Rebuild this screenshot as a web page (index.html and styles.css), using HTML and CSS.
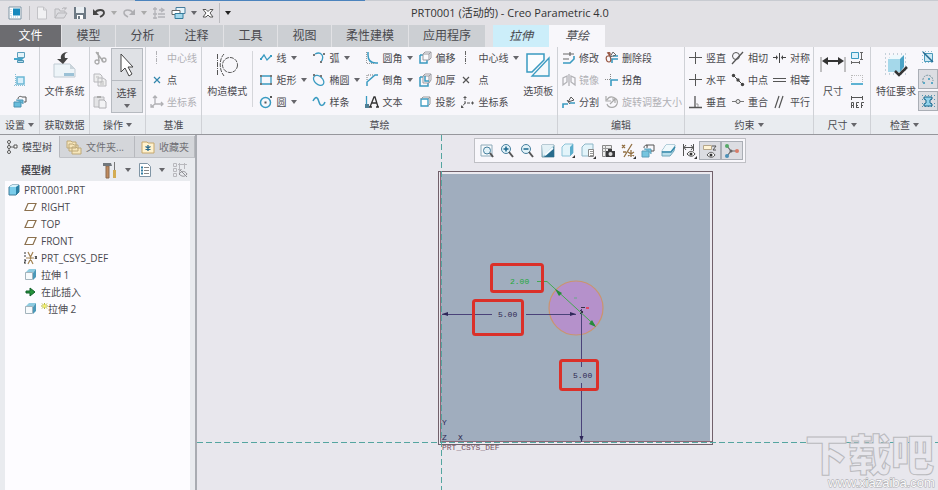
FILE: index.html
```html
<!DOCTYPE html>
<html lang="zh-CN">
<head>
<meta charset="utf-8">
<title>PRT0001 (活动的) - Creo Parametric 4.0</title>
<link rel="stylesheet" href="styles.css">
</head>
<body>
<header class="titlebar">
  <div class="progress"></div>
  <div class="quick">
    <button class="app" aria-label="窗口"><svg width="14" height="14" viewBox="0 0 14 14"><path d="M1 1h12v12H1z" fill="#fff" stroke="#7f95a5"/><path d="M5 2.500h7v7H5z" fill="#1689bd"/><path d="M3 3v8h8" fill="none" stroke="#a9c9dc" stroke-dasharray="1 1"/></svg></button>
    <button aria-label="新建"><svg width="14" height="14" viewBox="0 0 14 14"><path d="M2.500 1h6l3 3v9h-9z" fill="#f1f1f3" stroke="#c3c3c7"/><path d="M8.500 1v3h3" fill="none" stroke="#c3c3c7"/></svg></button>
    <button aria-label="打开"><svg width="14" height="14" viewBox="0 0 14 14"><path d="M1 12V3h4l1 2h5v2M1 12l3-5h9l-3 5zM8 3q2-3 4 0m0-2v2h-2" fill="#dcdce0" stroke="#b7b7bb"/></svg></button>
    <button aria-label="保存"><svg width="14" height="14" viewBox="0 0 14 14"><path d="M1 1h11l1 1v11H1z" fill="#6d7984"/><path d="M3 1h8v6H3z" fill="#e9eef2"/><path d="M4 9h6v4H4z" fill="#fff"/><path d="M5 10h2v3H5z" fill="#6d7984"/></svg></button>
    <button aria-label="撤消"><svg width="14" height="14" viewBox="0 0 14 14"><path d="M3 7c2-4 9-4 9 0 0 2-2 3-4 4" fill="none" stroke="#444" stroke-width="1.800"/><path d="M1 3v6h6z" fill="#444"/></svg></button>
    <i class="caret pale"></i>
    <button aria-label="重做"><svg width="14" height="14" viewBox="0 0 14 14"><path d="M11 7c-2-4-9-4-9 0 0 2 2 3 4 4" fill="none" stroke="#aeaeb2" stroke-width="1.500"/><path d="M13 3v6H7z" fill="#aeaeb2"/></svg></button>
    <i class="caret pale"></i>
    <button aria-label="重新生成"><svg width="14" height="14" viewBox="0 0 14 14"><path d="M3 1v12M6 11h7M6 8h7M1 3h4M1 8h4M1 12h4M7 4h4m-2-2 3 2-3 2" fill="none" stroke="#b3b3b8" stroke-width="1.300"/></svg></button>
    <button aria-label="窗口列表"><svg width="15" height="14" viewBox="0 0 15 14"><path d="M5 1.500h9v6H5z" fill="#e5f3fa" stroke="#477d9d"/><path d="M1 4.500h8v4H1z" fill="#fff" stroke="#666"/><path d="M4 7.500h8v5H4z" fill="#a3d8ec" stroke="#347c9d"/></svg></button>
    <i class="caret"></i>
    <button aria-label="关闭窗口"><svg width="12" height="12" viewBox="0 0 12 12"><path d="M1 2.500h3l2 2 2-2h3L8 6l3 4H8L6 8l-2 2H1l3-4z" fill="#fff" stroke="#555"/></svg></button>
    <span class="divider"></span>
    <i class="caret dark"></i>
  </div>
  <h1>PRT0001 (活动的) - Creo Parametric 4.0</h1>
</header>

<nav class="tabs">
  <a href="#" class="file">文件</a><a href="#">模型</a><a href="#">分析</a><a href="#">注释</a><a href="#">工具</a><a href="#">视图</a><a href="#" class="wide">柔性建模</a><a href="#" class="wide">应用程序</a><a href="#" class="context">拉伸</a><a href="#" class="current">草绘</a>
</nav>

<main>
<section class="ribbon">
  <div class="group">
    <div class="tools center">
      <div class="col icons">
        <button aria-label="草绘设置"><svg width="14" height="14" viewBox="0 0 14 14"><path d="M4.500 1.500h7v5h-7z" fill="#e4f4fa" stroke="#5d9fbd"/><path d="M1 7h10l-2 2H1z" fill="#45a6cb"/><path d="M4.500 9.500h6v2h-6z" fill="#b4dcec" stroke="#4c93b2"/></svg></button>
        <button aria-label="参考"><svg width="14" height="14" viewBox="0 0 14 14"><path d="M4 4h7v7H4z" fill="#d8effa" stroke="#6cb8d5" stroke-width="1.500"/><path d="M2.500 1v12M1 12.500h12" stroke="#87bdd4" stroke-dasharray="1 1"/></svg></button>
        <button aria-label="草绘视图"><svg width="14" height="14" viewBox="0 0 14 14"><path d="M1 7h7v5H1zM3 5h7v4" fill="#67bddc" stroke="#4a91b0"/><path d="M9 2h4v5h-2M5 4c0-3 3-3 4-2" fill="none" stroke="#555"/></svg></button>
      </div>
    </div>
    <h2>设置<i class="caret"></i></h2>
  </div>
  <div class="group">
    <div class="tools center">
      <button class="big"><svg width="24" height="28" viewBox="0 0 24 28"><path d="M1 13h16l5 5v8H1z" fill="#edf4f8" stroke="#c0cbd3"/><path d="M17 13v5h5z" fill="#cbd5dc"/><path d="M11 22h10v3H11z" fill="#9bc1d6"/><path d="M15 1c-5 0-8 3-7 7H4l6 5 5-6h-3c-1-3 0-5 3-6" fill="#444"/></svg>文件系统</button>
    </div>
    <h2>获取数据</h2>
  </div>
  <div class="group">
    <div class="tools center split">
      <div class="col icons">
        <button aria-label="剪切" disabled><svg width="14" height="14" viewBox="0 0 14 14"><path d="m3 1 7 9M5 1l1 9" stroke="#aaa" stroke-width="1.500"/><circle cx="4" cy="11" r="2" fill="none" stroke="#aaa" stroke-width="1.300"/><circle cx="11" cy="9" r="2" fill="none" stroke="#aaa" stroke-width="1.300"/></svg></button>
        <button aria-label="复制" disabled><svg width="14" height="14" viewBox="0 0 14 14"><path d="M1 1h6l2 2v6H1zM5 5h5l3 2v6H5z" fill="#eee" stroke="#b8b8bc"/><path d="M7 9h4M7 11h4M3 4h3" stroke="#bbb"/></svg></button>
        <button aria-label="粘贴" disabled><svg width="14" height="14" viewBox="0 0 14 14"><path d="M1 2h10v10H1z" fill="#e4e4e6" stroke="#b8b8bc"/><path d="M4 1h4v2H4z" fill="#aaa"/><path d="M6 5h5l2 2v6H6z" fill="#f3f3f5" stroke="#b0b0b4"/></svg></button>
      </div>
      <button class="select"><span><svg width="16" height="24" viewBox="0 0 16 24"><path d="M2 1v18l4-4 4 8 3-2-4-7h5z" fill="#fff" stroke="#444"/></svg></span><span>选择<i class="caret"></i></span></button>
    </div>
    <h2>操作<i class="caret"></i></h2>
  </div>
  <div class="group">
    <div class="tools indent">
      <div class="col">
        <button disabled><svg width="14" height="14" viewBox="0 0 14 14"><path d="M6.500 0v14" stroke="#b2b2b6" stroke-dasharray="4 1 1 1"/></svg>中心线</button>
        <button><svg width="14" height="14" viewBox="0 0 14 14"><path d="m4 4 6 6m0-6-6 6" stroke="#3186ad" stroke-width="1.200"/></svg>点</button>
        <button disabled><svg width="14" height="14" viewBox="0 0 14 14"><path d="M5 1v8h8M5 9l-4 3M3 3l2-2 2 2M11 7l2 2-2 2M1 9v3h3" fill="none" stroke="#b0b0b4" stroke-width="1.300"/></svg>坐标系</button>
      </div>
    </div>
    <h2>基准</h2>
  </div>
  <div class="group">
    <div class="tools">
      <button class="big mode"><svg width="24" height="28" viewBox="0 0 24 28"><path d="M2.500 3v22" stroke="#555" stroke-dasharray="5 1 1 1"/><path d="M9 3c-5 5-5 16 0 22" fill="none" stroke="#555" stroke-dasharray="4 1"/><circle cx="15" cy="14" r="7.500" fill="none" stroke="#555" stroke-dasharray="4 1"/></svg>构造模式</button>
      <div class="sketch">
        <div class="col">
          <button><svg width="14" height="14" viewBox="0 0 14 14"><path d="m2 8 3-4 3 5 4-4" fill="none" stroke="#3a9bc1" stroke-width="1.300"/><path d="M1 7h2v2H1zM11 4h2v2h-2z" fill="#3a9bc1"/></svg>线<i class="caret"></i></button>
          <button><svg width="14" height="14" viewBox="0 0 14 14"><path d="M2 3h10v8H2z" fill="none" stroke="#3a9bc1" stroke-width="1.300"/><path d="M1 2h2v2H1zM11 2h2v2h-2zM1 10h2v2H1zM11 10h2v2h-2z" fill="#777"/></svg>矩形<i class="caret"></i></button>
          <button><svg width="14" height="14" viewBox="0 0 14 14"><circle cx="6.500" cy="7.500" r="5" fill="none" stroke="#3a9bc1" stroke-width="1.500"/><path d="M5.500 6.500h2v2h-2zM11 1h2v2h-2z" fill="#555"/></svg>圆<i class="caret"></i></button>
        </div>
        <div class="col">
          <button><svg width="14" height="14" viewBox="0 0 14 14"><path d="M3 3c6-3 10 2 6 8" fill="none" stroke="#3a9bc1" stroke-width="1.300"/><path d="M1 3h2v2H1zM11 2h2v2h-2zM8 10h2v2H8z" fill="#777"/></svg>弧<i class="caret"></i></button>
          <button><svg width="14" height="14" viewBox="0 0 14 14"><ellipse cx="7" cy="7.500" rx="6" ry="4" transform="rotate(42 7 7)" fill="none" stroke="#3a9bc1" stroke-width="1.300"/><path d="M1 1h2v2H1zM8 2h2v2H8z" fill="#777"/></svg>椭圆<i class="caret"></i></button>
          <button><svg width="14" height="14" viewBox="0 0 14 14"><path d="M1 6c3-6 5-3 6 1s4 5 6 0" fill="none" stroke="#3a9bc1" stroke-width="1.500"/></svg>样条</button>
        </div>
        <div class="col">
          <button><svg width="14" height="14" viewBox="0 0 14 14"><path d="M3 1v3c0 5 3 8 8 8h2" fill="none" stroke="#3a9bc1" stroke-width="1.500"/><path d="M1.500 1v11.500H10" fill="none" stroke="#999" stroke-dasharray="1 1"/></svg>圆角<i class="caret"></i></button>
          <button><svg width="14" height="14" viewBox="0 0 14 14"><path d="M2 13V9l8-7h3" fill="none" stroke="#3a9bc1" stroke-width="1.500"/><path d="M2 7V2h6" fill="none" stroke="#777" stroke-dasharray="1 1"/></svg>倒角<i class="caret"></i></button>
          <button><svg width="14" height="14" viewBox="0 0 14 14"><path d="M1.500 1v9" fill="none" stroke="#3a9bc1" stroke-width="1.300"/><path d="m5 12 4-10h1l3 10M7 8h5M4 12h3M11 12h3" fill="none" stroke="#333" stroke-width="1.300"/><path d="M0 9h4v4H0z" fill="#4f7f95"/></svg>文本</button>
        </div>
        <div class="col">
          <button><svg width="14" height="14" viewBox="0 0 14 14"><path d="M2 4v8h7V9M2 4h3" fill="none" stroke="#3a9bc1" stroke-width="1.500"/><path d="M5 3h6v6H5zM5 3l2-2h6l-2 2m2-2v6l-2 2" fill="#fafafd" stroke="#9a9aa0"/></svg>偏移</button>
          <button><svg width="14" height="14" viewBox="0 0 14 14"><path d="M2 4v9h8v-3M2 4h3" fill="none" stroke="#3a9bc1" stroke-width="1.500"/><path d="M5 3h6v7H5zM5 3l2-2h6l-2 2m2-2v6l-2 3" fill="#fafafd" stroke="#9a9aa0"/><path d="M7 3v5h4" fill="none" stroke="#3a9bc1" stroke-width="1.500"/></svg>加厚</button>
          <button><svg width="14" height="14" viewBox="0 0 14 14"><path d="M3 4h7v7H3z" fill="#fff" stroke="#3a9bc1" stroke-width="1.300"/><path d="m3 4 2-2h7l-2 2m2-2v7l-2 2" fill="none" stroke="#999"/></svg>投影</button>
        </div>
        <div class="col">
          <button><svg width="14" height="14" viewBox="0 0 14 14"><path d="M4.500 0v14" stroke="#666" stroke-dasharray="4 1 1 1"/></svg>中心线<i class="caret"></i></button>
          <button><svg width="14" height="14" viewBox="0 0 14 14"><path d="m2 4 6 6m0-6-6 6" stroke="#555" stroke-width="1.200"/></svg>点</button>
          <button><svg width="14" height="14" viewBox="0 0 14 14"><path d="M4 2v6h8M4 8l-3 4" fill="none" stroke="#555" stroke-dasharray="3 1"/><path d="m2 3 2-2 2 2zM11 6l2 2-2 2zM0 10v3h3z" fill="#555"/></svg>坐标系</button>
        </div>
      </div>
      <button class="big palette"><svg width="24" height="28" viewBox="0 0 24 28"><path d="M1 3h17v6L6 21H1z" fill="#fbfdff" stroke="#3a9bc1" stroke-width="1.500"/><path d="M23 7v18H6z" fill="#f4f8fb" stroke="#3a9bc1" stroke-width="1.300"/></svg>选项板</button>
    </div>
    <h2>草绘</h2>
  </div>
  <div class="group">
    <div class="tools indent edit">
      <div class="col">
        <button><svg width="14" height="14" viewBox="0 0 14 14"><path d="M1 3h11M8 1v4M1 8h6" fill="none" stroke="#666" stroke-width="1.200"/><path d="M1 12h7l4-4V5" fill="none" stroke="#3a9bc1" stroke-width="1.600"/></svg>修改</button>
        <button disabled><svg width="14" height="14" viewBox="0 0 14 14"><path d="M7 1v12M5 3 1 5v7l4-3zM9 3l4 2v7L9 9z" fill="none" stroke="#b2b2b6" stroke-width="1.300"/></svg>镜像</button>
        <button><svg width="14" height="14" viewBox="0 0 14 14"><path d="M1 13V9h5M8 8h5" fill="none" stroke="#3a9bc1" stroke-width="1.600"/><path d="m6 7 3-5 3 3zM5 5l3 4" fill="none" stroke="#555"/></svg>分割</button>
      </div>
      <div class="col">
        <button><svg width="14" height="14" viewBox="0 0 14 14"><path d="M7 12V8h6M8 5h5" fill="none" stroke="#3a9bc1" stroke-width="1.600"/><path d="M2 2c4-2 4 3 1 3s-2 6 1 6 2-6-1-9" fill="none" stroke="#94533f" stroke-width="1.200"/><path d="m5 6 3-5 3 3z" fill="none" stroke="#666"/></svg>删除段</button>
        <button><svg width="14" height="14" viewBox="0 0 14 14"><path d="M5.500 1v5M0 6.500h5" stroke="#888" stroke-dasharray="1 1"/><path d="M6 13V7h7" fill="none" stroke="#3a9bc1" stroke-width="1.600"/></svg>拐角</button>
        <button disabled><svg width="14" height="14" viewBox="0 0 14 14"><path d="M2 5c3-6 12-2 10 4-2 5-9 4-10 0M1 1v5h5M5 9l5-5M10 8V4H7" fill="none" stroke="#aaa" stroke-width="1.200"/></svg>旋转调整大小</button>
      </div>
    </div>
    <h2>编辑</h2>
  </div>
  <div class="group">
    <div class="tools indent constraints">
      <div class="col">
        <button><svg width="14" height="14" viewBox="0 0 14 14"><path d="M6.500 1v12M0 6.500h13" stroke="#555"/></svg>竖直</button>
        <button><svg width="14" height="14" viewBox="0 0 14 14"><path d="M6.500 1v12M0 6.500h13" stroke="#555"/></svg>水平</button>
        <button><svg width="14" height="14" viewBox="0 0 14 14"><path d="M6 1v11M0 12.500h13" stroke="#555" stroke-width="1.300"/><path d="M6 9h3v3" fill="none" stroke="#999"/></svg>垂直</button>
      </div>
      <div class="col">
        <button><svg width="14" height="14" viewBox="0 0 14 14"><circle cx="5" cy="5" r="3.500" fill="none" stroke="#555"/><path d="M1 13 12 1" stroke="#555" stroke-width="1.300"/></svg>相切</button>
        <button><svg width="14" height="14" viewBox="0 0 14 14"><path d="m2 2 10 10" stroke="#444"/><circle cx="2.500" cy="2.500" r="1.700" fill="#444"/><circle cx="7" cy="7" r="1.700" fill="#444"/><circle cx="11.500" cy="11.500" r="1.700" fill="#444"/></svg>中点</button>
        <button><svg width="14" height="14" viewBox="0 0 14 14"><path d="M1 6.500h12" stroke="#777"/><circle cx="7" cy="6.500" r="2" fill="#eee" stroke="#666"/></svg>重合</button>
      </div>
      <div class="col">
        <button><svg width="14" height="14" viewBox="0 0 14 14"><path d="M6.500 2v10M0 6.500h4M9 6.500h4" fill="none" stroke="#444"/><path d="m3 4 2 2.500L3 9zM10 4 8 6.500 10 9z" fill="#444"/></svg>对称</button>
        <button><svg width="14" height="14" viewBox="0 0 14 14"><path d="M0 5.500h13M0 8.500h13" stroke="#555" stroke-width="1.200"/></svg>相等</button>
        <button><svg width="14" height="14" viewBox="0 0 14 14"><path d="M2 13 6 1M6 13l4-12" stroke="#555" stroke-width="1.200"/></svg>平行</button>
      </div>
    </div>
    <h2>约束<i class="caret"></i></h2>
  </div>
  <div class="group">
    <div class="tools center split">
      <button class="big"><svg width="26" height="28" viewBox="0 0 26 28"><path d="M1 6v15M25 6v15" stroke="#888"/><path d="M4 10h18" stroke="#333" stroke-width="2"/><path d="m2 10 6-4v8zM24 10l-6-4v8z" fill="#333"/></svg>尺寸</button>
      <div class="col icons">
        <button aria-label="周长"><svg width="14" height="14" viewBox="0 0 14 14"><path d="M1.500 1.500h7v6h-7z" fill="#dff2fb" stroke="#3a9bc1"/><path d="M11.500 1v8M1 11.500h9M10 1.500h3M10 8.500h3M1.500 10v3M9.500 10v3" stroke="#666"/></svg></button>
        <button aria-label="基线"><svg width="14" height="14" viewBox="0 0 14 14"><path d="M1.500 2v8M12.500 2v8M2 2.500h10" fill="none" stroke="#bbb" stroke-dasharray="1 1"/><path d="M1 11h12" stroke="#5db2d3" stroke-width="2"/></svg></button>
        <button aria-label="参考尺寸"><svg width="14" height="14" viewBox="0 0 14 14"><path d="M1.500 1v4M12.500 1v4M2 2.500h10M1.500 13V7.500h2v3h-2m2 0V13M6.500 13V7.500H9M6 10.500h2M6 12.500h3M11.500 13V7.500H14M11 10.500h2" fill="none" stroke="#555"/></svg></button>
      </div>
    </div>
    <h2>尺寸<i class="caret"></i></h2>
  </div>
  <div class="group">
    <div class="tools center inspect">
      <button class="big"><svg width="24" height="28" viewBox="0 0 24 28"><path d="M1 3h22M1 7h22M1 11h22M1 15h22M1 19h22M1 23h22" stroke="#91aab9" stroke-dasharray="1 3"/><path d="m4 8 4-4h12l-4 4z" fill="#eef9fd"/><path d="M4 8h12v13H4z" fill="#a5d8ea"/><path d="m16 8 4-4v12l-4 5z" fill="#4ba3c6"/><path d="m11 20 4 4 8-8" fill="none" stroke="#333" stroke-width="2.500"/></svg>特征要求</button>
      <div class="col toggles">
        <button aria-label="重叠几何"><svg width="14" height="14" viewBox="0 0 14 14"><path d="M1 1.500h12M1 5.500h12M1 9.500h12M1 12.500h12" stroke="#8cbdd0" stroke-dasharray="1 2"/><path d="M3.500 3.500h8v8h-8z" fill="#cde9f4" stroke="#4a9abb"/><path d="m2 2 10 10" fill="none" stroke="#246b92" stroke-width="1.500"/></svg></button>
        <button class="on" aria-label="突出显示开放端"><svg width="14" height="14" viewBox="0 0 14 14"><path d="M2 11c-2-10 10-10 10-2" fill="none" stroke="#7895a0" stroke-dasharray="2 1"/><path d="M2 10h2v2H2zM7 6h2v2H7zM10 10h2v2h-2z" fill="#5aa9c6"/></svg></button>
        <button class="on" aria-label="着色封闭环"><svg width="14" height="14" viewBox="0 0 14 14"><path d="M1 1.500h13M1 5.500h13M1 9.500h13M1 12.500h13" stroke="#5696b0" stroke-dasharray="1 2"/><path d="M3 3h8v2L9 6v3l2 1v2H3v-2l2-1V6L3 5z" fill="#93d3eb" stroke="#19678c"/></svg></button>
      </div>
    </div>
    <h2>检查<i class="caret"></i></h2>
  </div>
</section>

<div class="workspace">
  <aside>
    <nav class="panel-tabs">
      <a href="#" class="current"><svg width="12" height="16" viewBox="0 0 12 16"><path d="M3 4v9M5 8h3" stroke="#666"/><g fill="#fff" stroke="#555"><circle cx="3" cy="3" r="1.500"/><circle cx="3" cy="8" r="1.500"/><circle cx="3" cy="13" r="1.500"/><path d="M8 6h3v3H8z"/></g></svg>模型树</a>
      <a href="#"><svg width="16" height="16" viewBox="0 0 16 16"><path d="M1 2h4l1 1h4v6H1zM3 5h4l1 1h4v6H3zM6 8h4l1 1h4v6H6z" fill="#f6e6bb" stroke="#bda878"/></svg>文件夹...</a>
      <a href="#"><svg width="14" height="14" viewBox="0 0 14 14"><path d="M1 2h5l1 1h6v10H1z" fill="#fff2ce" stroke="#c6a76a"/><path d="M7 5v6M4.500 6.500l5 3M9.500 6.500l-5 3" stroke="#27698c" stroke-width="1.300"/></svg>收藏夹</a>
    </nav>
    <div class="panel-head">
      <h2>模型树</h2>
      <button aria-label="设置"><svg width="16" height="18" viewBox="0 0 16 18"><path d="M4 5h3v12H4z" fill="#c08a5c" stroke="#8a6a50"/><path d="M1 2h8l1 3H1z" fill="#71777c"/><path d="M12.500 1v9" stroke="#777"/><path d="M11 9h3v8h-3z" fill="#d3ac53"/></svg></button><i class="caret"></i>
      <button aria-label="显示"><svg width="14" height="16" viewBox="0 0 14 16"><path d="M1.500 1.500h8l3 3v10h-11z" fill="#fff" stroke="#8095a5"/><path d="M3 5.500h2M3 8.500h2M3 11.500h2" stroke="#347da1" stroke-width="2"/><path d="M6 5.500h5M6 8.500h5M6 11.500h5" stroke="#888"/></svg></button><i class="caret"></i>
      <button aria-label="隐藏列" disabled><svg width="16" height="16" viewBox="0 0 16 16"><path d="M1.500 1.500h3v3h-3zM1.500 6.500h3v3h-3zM1.500 11.500h3v3h-3zM7.500 1v12M12.500 1v6M6 2.500h9M6 7.500h4" fill="none" stroke="#b8b8bd"/><path d="M7 12c3-4 6-3 8 0-2 3-5 3-8 0m1-4 7 7" fill="none" stroke="#909095"/></svg></button>
    </div>
    <ul class="tree">
      <li class="root"><svg width="12" height="12" viewBox="0 0 12 12"><path d="m1 3 3-2h7v7l-3 3H1z" fill="#7accea" stroke="#417d99"/><path d="m1 3 3-2h7L8 3z" fill="#d7f2fb"/><path d="M8 3v8l3-3V1z" fill="#297fa4"/></svg>PRT0001.PRT</li>
      <li><svg width="13" height="12" viewBox="0 0 13 12"><path d="M4 2.500h8l-3 7H1z" fill="#fff" stroke="#8c704e" stroke-width="1.200"/></svg>RIGHT</li>
      <li><svg width="13" height="12" viewBox="0 0 13 12"><path d="M4 2.500h8l-3 7H1z" fill="#fff" stroke="#8c704e" stroke-width="1.200"/></svg>TOP</li>
      <li><svg width="13" height="12" viewBox="0 0 13 12"><path d="M4 2.500h8l-3 7H1z" fill="#fff" stroke="#8c704e" stroke-width="1.200"/></svg>FRONT</li>
      <li><svg width="13" height="14" viewBox="0 0 13 14"><path d="m4 1 3 6-3 6M9 1 6 7l3 6M2 7h8" fill="none" stroke="#a38454" stroke-width="1.200"/><path d="M0 2h2M0 5h2M0 9h2l-2 3h2M11 5l2 3m0-3-2 3" fill="none" stroke="#333"/></svg>PRT_CSYS_DEF</li>
      <li><svg width="13" height="13" viewBox="0 0 13 13"><path d="m1 5 4-4h7L9 5z" fill="#8fcbe0"/><path d="m9 5 3-4v8l-3 3z" fill="#4b98b8"/><path d="M1.500 4.500h7v7h-7z" fill="#f7fafc" stroke="#a3b3bc"/></svg>拉伸 1</li>
      <li><svg width="13" height="12" viewBox="0 0 13 12"><path d="M2 5h4V2l5 4-5 4V7H2z" fill="#25943a" stroke="#12602b"/></svg>在此插入</li>
      <li><svg width="13" height="13" viewBox="0 0 13 13"><path d="m1 5 4-4h7L9 5z" fill="#8fcbe0"/><path d="m9 5 3-4v8l-3 3z" fill="#4b98b8"/><path d="M1.500 4.500h7v7h-7z" fill="#f7fafc" stroke="#a3b3bc"/></svg><svg class="spark" width="7" height="13" viewBox="0 0 7 13"><path d="M3.500 1v6M0 4h7M1 1.500l5 5M6 1.500l-5 5" stroke="#b5b735"/><circle cx="3.500" cy="4" r="1.500" fill="#f5f36e"/></svg>拉伸 2</li>
    </ul>
  </aside>

  <div class="canvas">
    <div class="viewbar">
      <button aria-label="重新调整"><svg width="16" height="16" viewBox="0 0 16 16"><path d="M2 2h11v11H2z" fill="#f6f9fb" stroke="#8daab9"/><circle cx="8" cy="7.500" r="3.500" fill="#e2f2f8" stroke="#467f9e"/><path d="m11 10 3 4" stroke="#555" stroke-width="2"/></svg></button>
      <button aria-label="放大"><svg width="16" height="16" viewBox="0 0 16 16"><circle cx="7" cy="6" r="4.500" fill="#e2f2f8" stroke="#467f9e"/><path d="M4.500 6h5M7 3.500v5" stroke="#1b688f" stroke-width="1.500"/><path d="m10 9 4 5" stroke="#555" stroke-width="2"/></svg></button>
      <button aria-label="缩小"><svg width="16" height="16" viewBox="0 0 16 16"><circle cx="7" cy="6" r="4.500" fill="#e2f2f8" stroke="#467f9e"/><path d="M4.500 6h5" stroke="#1b688f" stroke-width="1.500"/><path d="m10 9 4 5" stroke="#555" stroke-width="2"/></svg></button>
      <button aria-label="重画"><svg width="16" height="16" viewBox="0 0 16 16"><path d="M2 2h12v12H2z" fill="#a4cfdf" stroke="#779baa"/><path d="M2 2h12L3 13z" fill="#e4f1f6"/><path d="M14 4v10H4z" fill="#286c8d"/><path d="m5 12 8-7" stroke="#f5fbff" stroke-width="2"/></svg></button>
      <button aria-label="显示样式"><svg width="16" height="16" viewBox="0 0 16 16"><path d="m2 4 3-3h8v9l-3 3H2z" fill="#e3f4fa" stroke="#8cc3d8"/><path d="M10 4v9l3-3V1z" fill="#5badcc"/><path d="M15 12v3h-3z" fill="#333"/></svg></button>
      <button aria-label="已保存方向"><svg width="16" height="16" viewBox="0 0 16 16"><path d="m2 4 3-3h8v8l-3 4H2z" fill="#e3f4fa" stroke="#8db6c7"/><path d="M8.500 6.500h5v7h-5z" fill="#fff" stroke="#888"/><path d="M10 8.500h3M10 10.500h3M10 12.500h3" stroke="#999"/><path d="M16 13v3h-3z" fill="#333"/></svg></button>
      <button aria-label="视图管理器"><svg width="16" height="16" viewBox="0 0 16 16"><path d="M2.500 2.500h9v11h-9z" fill="#eee" stroke="#888"/><path d="M5.500 2v12M2 5.500h10M2 8.500h10" stroke="#999"/><path d="M6 8h9v6H6zM8 6h4v3H8z" fill="#3b3b3d"/><circle cx="10.500" cy="11" r="2" fill="#ddd"/></svg></button>
      <button aria-label="基准显示过滤器"><svg width="16" height="16" viewBox="0 0 16 16"><path d="m2 2 3 3m0-3L2 5M12 1 4 14M11 7v7M8 9l6 4M14 9l-6 4M3 9h3" fill="none" stroke="#927043" stroke-width="1.300"/><path d="M16 13v3h-3z" fill="#333"/></svg></button>
      <button aria-label="草绘视图"><svg width="16" height="16" viewBox="0 0 16 16"><path d="M2 8h7v6H2zM4 6h7v5" fill="#75c5df" stroke="#5c9db8"/><path d="M8 2h6v6h-3M4 5c0-3 2-3 4-2M7 1v4" fill="none" stroke="#555"/></svg></button>
      <button aria-label="剪切视图"><svg width="16" height="16" viewBox="0 0 16 16"><path d="m2 8 4-6h9l-1 6-4 5H2z" fill="#b9dfec" stroke="#70a5b9"/><path d="m2 8 4-6h9l-4 6z" fill="#f1f9fc"/><path d="M2 9h9l4-5" fill="none" stroke="#3788a9" stroke-width="1.500"/></svg></button>
      <button aria-label="草绘显示"><svg width="16" height="16" viewBox="0 0 16 16"><path d="M2.500 1v12M12.500 1v7M3 4.500h9M5 2 3 4.500 5 7M10 2l2 2.500L10 7" fill="none" stroke="#555"/><path d="M6 11c3-4 6-3 8 0-2 3-5 3-8 0" fill="#fff" stroke="#444"/><circle cx="10" cy="11" r="1.500" fill="#333"/><path d="M16 13v3h-3z" fill="#333"/></svg></button>
      <button class="on" aria-label="注释显示"><svg width="16" height="16" viewBox="0 0 16 16"><path d="M1.500 2.500h8v4h-8z" fill="#fff4d6" stroke="#b5a68a"/><path d="M10 3h4l-3 4h3" fill="none" stroke="#555"/><path d="M5 12c3-4 6-3 8 0-2 3-5 3-8 0" fill="#fff" stroke="#555"/><circle cx="9" cy="12" r="1.500" fill="#333"/></svg></button>
      <button class="on" aria-label="旋转中心"><svg width="16" height="16" viewBox="0 0 16 16"><path d="M3 3 7 8h6M7 8l-4 5" fill="none" stroke="#666" stroke-width="1.200"/><circle cx="3" cy="3" r="2" fill="#56a967"/><circle cx="13" cy="8" r="2" fill="#d77c68"/><circle cx="3" cy="13" r="2" fill="#4b91b8"/><circle cx="7" cy="8" r="1.500" fill="#666"/></svg></button>
    </div>
    <svg class="drawing" viewBox="197 135 741 355" preserveAspectRatio="xMinYMin meet">
      <rect x="438.500" y="171.500" width="274" height="273" fill="#eceaf0" stroke="#71616b"/>
      <rect x="441" y="174" width="269" height="268" fill="#a0adbe"/>
      <path d="M441 441.500h271M440.500 172v270" stroke="#8c6876"/>
      <path d="M441.500 135v355M197 442.500h741" stroke="#54a5a0" stroke-dasharray="6 3"/>
      <circle cx="576" cy="308" r="27" fill="#b591cb" stroke="#ca946f" stroke-width="1.200"/>
      <g fill="none" stroke="#4a4279"><path d="M442 314.500h50M526 314.500h50M581.500 309v58M581.500 383v59"/></g>
      <path d="m442 314 6-2v4zM576 314l-6-2v4zM581.500 442l-2-6h4z" fill="#2f2859"/>
      <path d="M537 281.500h10l48 44" fill="none" stroke="#43a951"/>
      <path d="m555 289 7 4-3 3zM596 327l-7-3 3-4z" fill="#268b3b"/>
      <path d="M574 298h3" stroke="#67a984"/>
      <path d="m580 310 3 3m-3 1 3-3M581 307.500h4" stroke="#373048"/><path d="M586 307h3v2h-3z" fill="#df4967"/>
      <g class="dims"><text class="green" x="510" y="284">2.00</text><text x="498" y="317">5.00</text><text x="573" y="378">5.00</text><text x="442" y="425">Y</text><text x="442" y="440">Z</text><text x="458" y="440">X</text><text class="csys" x="442" y="450">PRT_CSYS_DEF</text></g>
      <g fill="none" stroke="#db3029" stroke-width="3"><rect x="491.500" y="264.500" width="51" height="27" rx="2"/><rect x="473.500" y="300.500" width="49" height="34" rx="2"/><rect x="560.500" y="360.500" width="37" height="29" rx="2"/></g>
      <text class="mark" x="805" y="471">下载吧</text>
      <text class="site" x="828" y="487">www.xiazaiba.com</text>
    </svg>
  </div>
</div>
</main>
</body>
</html>
```
FILE: styles.css
```css
* { box-sizing: border-box; }
body {
  margin: 0;
  height: 100vh;
  display: flex;
  flex-direction: column;
  overflow: hidden;
  background: #e2e1e5;
  color: #4a4a4f;
  font-family: "Open Sans", "Noto Sans CJK SC", sans-serif;
  font-size: 10px;
  line-height: 14px;
}
button { margin: 0; padding: 0; border: 0; background: none; color: inherit; font: inherit; white-space: nowrap; }
button:disabled { color: #b0b0b5; }
a { color: inherit; text-decoration: none; white-space: nowrap; }
h1, h2 { margin: 0; font-weight: 400; }
svg { display: block; flex: none; }
.caret { flex: none; border: 3px solid transparent; border-top: 4px solid #66666b; border-bottom: 0; }
.caret.pale { border-top-color: #aaa; }
.caret.dark { border-top-color: #222; }

.titlebar { position: relative; display: flex; align-items: center; height: 25px; border-top: 1px solid #c8cbd1; flex: none; }
.progress { position: absolute; left: 135px; top: -1px; width: 230px; height: 1px; background: #4b83bd; }
.quick { display: flex; align-items: center; gap: 5px; padding-left: 8px; width: 411px; }
.quick .app { padding-right: 7px; border-right: 1px solid #bcbcc0; }
.quick .divider { width: 1px; height: 20px; background: #bcbcc0; }
h1 { font-size: 11px; line-height: 18px; color: #333; white-space: nowrap; }

.tabs { display: flex; height: 22px; flex: none; font-size: 12px; line-height: 21px; text-align: center; }
.tabs a { width: 54px; background: #cccfd3; border-right: 1px solid #e2e2e5; }
.tabs .file { width: 62px; background: #6c6c70; color: #fff; }
.tabs .wide { width: 77px; }
.tabs .context { margin-left: 7px; width: 56px; background: #cceefa; font-style: italic; border: 0; }
.tabs .current { width: 56px; background: #f8f7fb; font-style: italic; border: 0; }

main { flex: 1; min-height: 0; display: flex; flex-direction: column; }
.ribbon { display: grid; grid-template-columns: 40fr 50fr 56fr 56fr 356fr 127fr 129fr 57fr 67fr; height: 88px; flex: none; background: #f8f7fb; border-bottom: 1px solid #96979c; }
.group { min-width: 0; display: flex; flex-direction: column; border-right: 1px solid #cfd1d6; }
.group:last-child { border: 0; }
.group h2 { display: flex; align-items: center; justify-content: center; gap: 3px; height: 19px; background: #e9ecf0; font-size: 10px; }
.tools { flex: 1; display: flex; }
.center { justify-content: center; }
.split { gap: 4px; }
.indent { padding-left: 4px; }
.col { display: flex; flex-direction: column; }
.col button { display: flex; align-items: center; gap: 3px; height: 22px; }
.col .caret { margin-left: 2px; }
.big { display: flex; flex-direction: column; align-items: center; gap: 3px; padding-top: 4px; }
.big svg { margin-bottom: 2px; }
.mode { width: 52px; margin-top: 4px; height: 56px; padding-top: 0; border-right: 1px solid #d5d6da; }
.sketch { display: grid; grid-template-columns: 53px 53px 53px 43px 1fr; flex: 1; padding-left: 6px; }
.palette { width: 38px; }
.edit { gap: 6px; }
.constraints { gap: 5px; }
.inspect { justify-content: space-between; padding-left: 5px; }
.toggles { gap: 2px; }
.toggles button { width: 20px; height: 20px; justify-content: center; border: 1px solid transparent; }
button.on { background: #dcdde2; border: 1px solid #aaaeb5; }
.select { display: flex; flex-direction: column; width: 32px; height: 65px; margin-top: 1px; background: #dfe1e5; border: 1px solid #b6bac0; }
.select span { flex: 1; display: flex; flex-direction: column; align-items: center; justify-content: center; gap: 4px; width: 100%; }
.select span + span { border-top: 1px solid #b6bac0; }

.workspace { flex: 1; min-height: 0; display: flex; }
aside { width: 197px; flex: none; display: flex; flex-direction: column; background: #e9ebef; border-right: 2px solid #a9acb2; padding: 1px 0 0; }
.panel-tabs { display: flex; height: 22px; }
.panel-tabs a { flex: 1; display: flex; align-items: center; gap: 4px; padding-left: 6px; background: #d4d6da; border-right: 1px solid #b7b9be; border-bottom: 1px solid #c0c2c7; color: #707075; }
.panel-tabs a + a { flex: 0 0 75px; }
.panel-tabs a + a + a { flex-basis: 60px; }
.panel-tabs .current { background: #e9ebef; border-bottom-color: #e9ebef; color: #4a4a4f; }
.panel-head { display: flex; align-items: center; gap: 7px; height: 23px; padding: 0 7px 0 21px; }
.panel-head h2 { flex: 1; font-size: 10px; font-weight: 700; }
.tree { flex: 1; margin: 0 5px; padding: 0; list-style: none; background: #fdfcff; }
.tree li { display: flex; align-items: center; gap: 4px; height: 17px; padding-left: 19px; }
.tree .root { padding-left: 3px; }
.spark { margin-right: -4px; }

.canvas { position: relative; flex: 1; min-width: 0; background: #e8e7ed; overflow: hidden; }
.drawing { width: 100%; height: 100%; }
.viewbar { position: absolute; left: 277px; top: 3px; display: flex; width: 272px; height: 25px; padding: 2px; background: #f8f7fb; border: 1px solid #bfc0c5; }
.viewbar button { flex: 1; display: flex; align-items: center; justify-content: center; }
.dims { font-family: "Liberation Mono", monospace; font-size: 8px; fill: #2d2850; }
.dims .green { fill: #22a838; }
.dims .csys { fill: #76505f; }
.mark { font-family: "Noto Sans CJK SC", sans-serif; font-size: 43px; font-weight: 900; fill: #e8e7ed; stroke: #b9b9bd; }
.site { font-family: "Liberation Sans", sans-serif; font-size: 13px; fill: #fafafa; stroke: #aaaaae; stroke-width: 1px; paint-order: stroke; }
```
